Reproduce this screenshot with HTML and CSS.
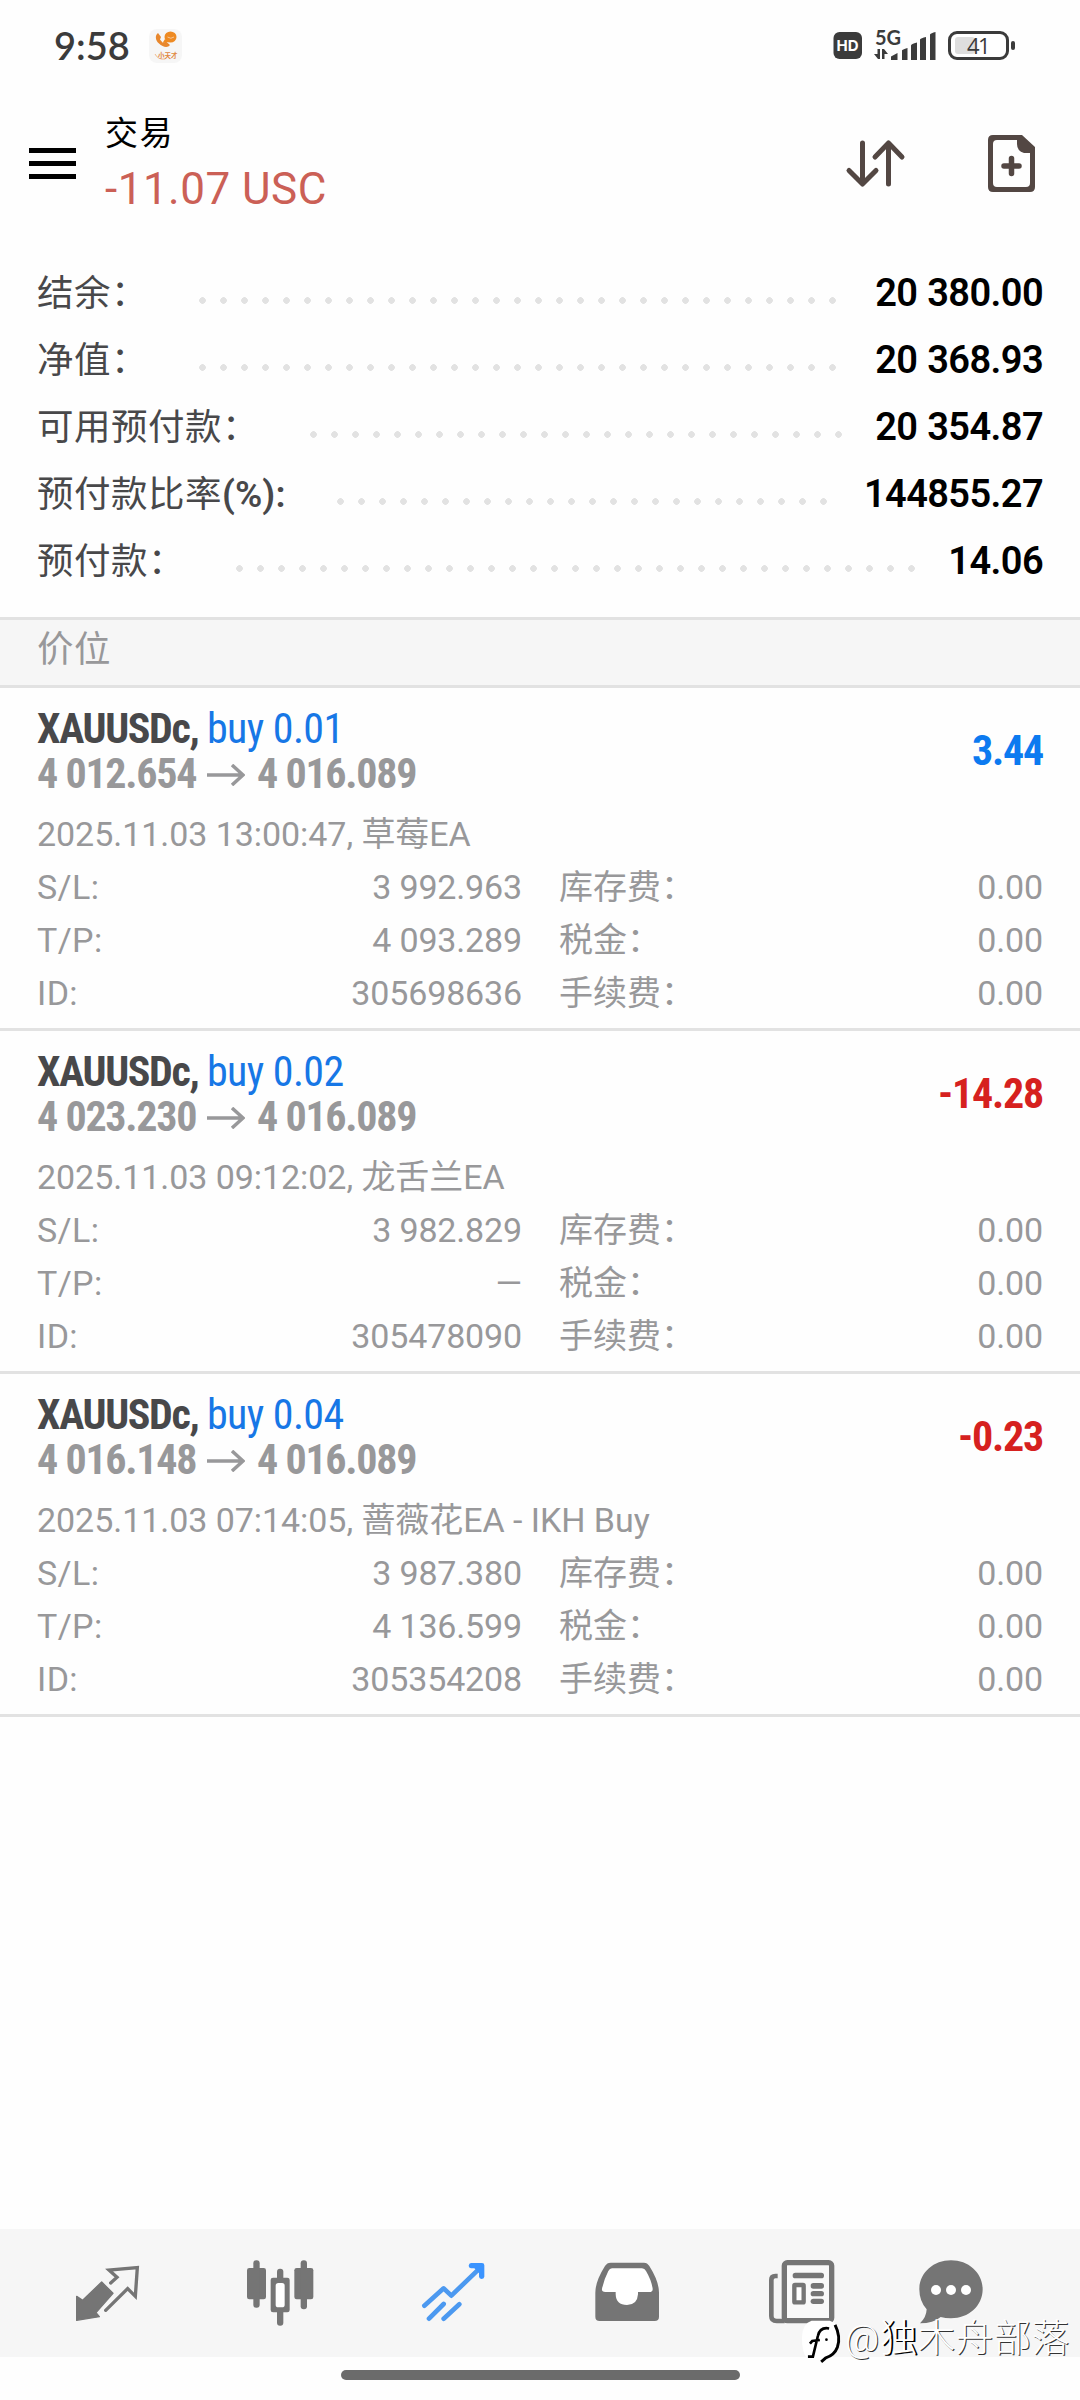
FILE: index.html
```html
<!DOCTYPE html>
<html lang="zh-CN">
<head>
<meta charset="utf-8">
<title>交易</title>
<link rel="stylesheet" href="styles.css">
</head>
<body>
<header class="status">
  <span class="clock">9:58</span>
  <svg class="app-badge" viewBox="0 0 33 34"><rect width="33" height="34" rx="8" fill="#f6f6f6"/><path d="M9 4C6 6 6 11 10 14.500C14 18.500 19 19 21 16L17 12.500L14 14L11 10.500L12 8Z" fill="#e8872d"/><ellipse cx="21.500" cy="8" rx="6" ry="5.500" fill="#ee8a22"/><path d="M16 10L13.500 14L20 13Z" fill="#ee8a22"/><path d="M18.500 8Q22 10.500 25 8" fill="none" stroke="#f6c79a"/><text class="badge-text" x="9" y="28.500">小天才</text><path d="M6 25Q9 31 16 30" fill="none" stroke="#eb9f60" stroke-width=".7"/></svg>
  <svg class="signals" viewBox="0 0 190 40">
    <rect x="3.500" y="7" width="28.500" height="27" rx="6" fill="#3b3b3b"/><text class="hd" x="6.500" y="26">HD</text>
    <text class="fiveg" x="45" y="20">5G</text>
    <g fill="#3b3b3b"><path d="M44 29L48 34H50V24H47.500V29ZM52 24V34H54.500V29H58L54 24Z"/>
    <path d="M61 35V31.500L67.500 28V35ZM72 35V25.500Q72 24.500 77.500 23V35ZM81 35V20.500Q81 19 87 17.500V35ZM90 35V14.500Q91 13 96 12V35ZM100 35V9.500Q101 8 105.500 7V35Z"/></g>
    <rect x="119.500" y="7.500" width="58" height="26" rx="7.500" fill="#fff" stroke="#3b3b3b" stroke-width="3"/><rect x="125" y="12" width="20" height="17" rx="3" fill="#dedede"/><rect x="181" y="16" width="4" height="9" rx="2" fill="#3b3b3b"/><text class="batt" x="137" y="29">41</text>
  </svg>
</header>
<section class="appbar">
  <div class="menu"><i></i><i></i><i></i></div>
  <div class="heading"><h1>交易</h1><p>-11.07 USC</p></div>
  <svg class="actions" viewBox="0 0 200 70">
    <g fill="none" stroke="#534743" stroke-width="5" stroke-linecap="round" stroke-linejoin="round"><path d="M22.500 13V53.500M9 40.500L22.500 54L36 40.500M48.500 54V13.500M35 27L48.500 13L62 27"/><path stroke-width="5.500" d="M164 36H179M171.500 28.500V43.500"/></g>
    <path fill="#534743" fill-rule="evenodd" d="M153 5H182L195 17V57Q195 62 190 62H153Q148 62 148 57V10Q148 5 153 5ZM157 10Q153 10 153 14V53Q153 57 157 57H186Q190 57 190 53V23H184Q177 21 177 14V10Z"/>
  </svg>
</section>
<section class="account">
  <div class="line l1"><span>结余：</span><i></i><b>20 380.00</b></div>
  <div class="line l2"><span>净值：</span><i></i><b>20 368.93</b></div>
  <div class="line l3"><span>可用预付款：</span><i></i><b>20 354.87</b></div>
  <div class="line l4"><span>预付款比率<em>(%):</em></span><i></i><b>144855.27</b></div>
  <div class="line l5"><span>预付款：</span><i></i><b>14.06</b></div>
</section>
<h2 class="group">价位</h2>
<main>
  <article class="pos">
    <div class="top"><div><p class="sym"><b>XAUUSDc,</b> <span>buy 0.01</span></p>
    <p class="price"><span>4 012.654</span><svg class="arrow" viewBox="0 0 38 22"><path d="M0 11H36M25 1L36 11L25 21"/></svg><span>4 016.089</span></p></div><strong class="up">3.44</strong></div>
    <p class="date">2025.11.03 13:00:47, 草莓EA</p>
    <dl><dt>S/L:</dt><dd>3 992.963</dd><dt>库存费：</dt><dd>0.00</dd><dt>T/P:</dt><dd>4 093.289</dd><dt>税金：</dt><dd>0.00</dd><dt>ID:</dt><dd>305698636</dd><dt>手续费：</dt><dd>0.00</dd></dl>
  </article>
  <article class="pos">
    <div class="top"><div><p class="sym"><b>XAUUSDc,</b> <span>buy 0.02</span></p>
    <p class="price"><span>4 023.230</span><svg class="arrow" viewBox="0 0 38 22"><path d="M0 11H36M25 1L36 11L25 21"/></svg><span>4 016.089</span></p></div><strong class="down">-14.28</strong></div>
    <p class="date">2025.11.03 09:12:02, 龙舌兰EA</p>
    <dl><dt>S/L:</dt><dd>3 982.829</dd><dt>库存费：</dt><dd>0.00</dd><dt>T/P:</dt><dd class="none">—</dd><dt>税金：</dt><dd>0.00</dd><dt>ID:</dt><dd>305478090</dd><dt>手续费：</dt><dd>0.00</dd></dl>
  </article>
  <article class="pos">
    <div class="top"><div><p class="sym"><b>XAUUSDc,</b> <span>buy 0.04</span></p>
    <p class="price"><span>4 016.148</span><svg class="arrow" viewBox="0 0 38 22"><path d="M0 11H36M25 1L36 11L25 21"/></svg><span>4 016.089</span></p></div><strong class="down">-0.23</strong></div>
    <p class="date">2025.11.03 07:14:05, 蔷薇花EA - IKH Buy</p>
    <dl><dt>S/L:</dt><dd>3 987.380</dd><dt>库存费：</dt><dd>0.00</dd><dt>T/P:</dt><dd>4 136.599</dd><dt>税金：</dt><dd>0.00</dd><dt>ID:</dt><dd>305354208</dd><dt>手续费：</dt><dd>0.00</dd></dl>
  </article>
</main>
<nav class="tabs">
  <svg class="tab" viewBox="60 87 522 384"><path fill="#757575" stroke="#757575" stroke-width="4" stroke-linejoin="round" d="M305 246L339 280L288 338L298 350L230 361V289L248 301Z"/><path fill="none" stroke="#757575" stroke-width="10" d="M332 249L351 232L327 210L412 203L406 289L383 266L317 331" stroke-linecap="round"/></svg>
  <svg class="tab" viewBox="582 87 522 384"><g fill="#757575"><rect x="741" y="204" width="57" height="94" rx="7"/><rect x="883" y="204" width="57" height="94" rx="7"/><rect x="760" y="181" width="19" height="142" rx="9"/><rect x="902" y="181" width="19" height="147" rx="9"/><rect x="831" y="206" width="19" height="171" rx="9"/><rect x="812" y="233" width="57" height="104" rx="7"/></g><rect x="827" y="249" width="27" height="73" rx="8" fill="#fff"/></svg>
  <svg class="tab" viewBox="24 87 522 384"><path fill="none" stroke="#4c99f0" stroke-width="14" stroke-linecap="round" stroke-linejoin="round" d="M193 317L251 265L274 287L362 202M207 356L251 312M251 356L298 313"/><path fill="#3b94ff" d="M333 189H366Q373 189 373 196V230Q372 237 364 237Q358 236 357 230V219L343 205H333Q326 204 326 197Q327 189 333 189Z"/></svg>
  <svg class="tab" viewBox="546 87 522 384"><path fill="#757575" d="M752 188H852Q862 188 868 198Q897 244 897 278V350Q897 363 884 363H719Q706 363 706 350V278Q706 244 735 198Q741 188 752 188Z"/><path fill="#fff" d="M756 205H846Q854 205 858 213Q874 240 878 266Q879 276 868 276H834V283Q832 315 801 315Q768 315 767 283V276H736Q724 276 726 266Q732 238 745 213Q749 205 756 205Z"/></svg>
  <svg class="tab" viewBox="-12 87 522 384"><rect x="193" y="188" width="142" height="174" rx="9" fill="#f9f9f9" stroke="#757575" stroke-width="16"/><path fill="none" stroke="#757575" stroke-width="14" d="M173 228H166Q154 228 154 240V348Q154 363 170 363H194"/><g fill="#757575"><rect x="218" y="218" width="94" height="17" rx="8"/><rect x="272" y="249" width="40" height="17" rx="8"/><rect x="272" y="273" width="40" height="16" rx="8"/><rect x="272" y="296" width="40" height="16" rx="8"/></g><rect x="223" y="255" width="28" height="52" rx="2" fill="#fff" stroke="#757575" stroke-width="13"/></svg>
  <svg class="tab last" viewBox="510 87 372 384"><path fill="#757575" d="M693 181C746 181 788 219 788 268C788 318 746 355 693 355Q676 355 662 351Q640 370 600 370Q619 352 620 328Q598 304 598 268C598 219 640 181 693 181Z"/><g fill="#fff"><circle cx="648" cy="270" r="15"/><circle cx="693" cy="270" r="15"/><circle cx="738" cy="270" r="15"/></g></svg>
</nav>
<footer class="gesture"><i></i></footer>
<div class="mark"><svg viewBox="240 360 130 135"><path d="M275 362H330Q360 370 361 410Q361 460 325 470L300 488V475H262Q245 460 246 410Q248 370 275 362Z" fill="#fff"/><path d="M346 374Q364 410 353 442Q344 466 318 474L304 486" fill="none" stroke="#000" stroke-width="9"/><path d="M328 385Q300 380 294 408L279 470L264 470M270 431L277 423L300 420" fill="none" stroke="#000" stroke-width="8"/><circle cx="320" cy="419" r="4"/></svg><span>@<b>独</b>木舟部落</span></div>
</body>
</html>
```
FILE: styles.css
```css
*{box-sizing:border-box}
body{margin:0;width:1080px;height:2400px;background:#fefefe;font-family:Roboto,"Noto Sans CJK SC",sans-serif;display:flex;flex-direction:column;position:relative;overflow:hidden}
h1,h2,p,dl,dt,dd{margin:0;font-weight:400}
svg{display:block;flex:none}
.status{height:92px;display:flex;padding-top:24px;align-items:flex-start}
.clock{margin-left:54px;width:95px;font:600 38px/42px Lato,sans-serif;color:#3b3b3b}
.app-badge{width:33px;height:34px;margin-top:5px}
.badge-text{font:700 6.500px "Noto Sans CJK SC",sans-serif;fill:#e0873c}
.signals{width:190px;height:40px;margin:1px 0 0 648px}
.hd{font:700 15px Inter,sans-serif;fill:#fff}
.fiveg{font:700 20px Lato,sans-serif;fill:#3b3b3b}
.batt{font:500 22px "Open Sans",sans-serif;fill:#3b3b3b;letter-spacing:-1.5px}
.appbar{height:167px;display:flex}
.menu{margin:56px 28px 0 29px;width:47px;display:flex;flex-direction:column;gap:8px}
.menu i{height:5px;background:#000}
.heading{flex:1;padding-top:17px}
.heading h1{font-size:33px;line-height:50px;letter-spacing:1.500px;margin-left:1px;color:#000}
.heading p{font-size:44px;line-height:52px;margin-top:4px;margin-left:1px;color:#cb6056;white-space:nowrap;letter-spacing:.5px}
.actions{width:200px;height:70px;margin:38px 40px 0 0}
.account{height:358px;padding-top:1px}
.line{height:67px;display:flex;padding:0 38px 0 37px;color:#48484a;font-size:36.500px;line-height:67px;letter-spacing:.5px}
.line i{height:7px;margin-top:37px;margin-left:1px;background:radial-gradient(circle at 3.500px 3.500px,#e2e2e2 3px,transparent 3.600px) 0 0/21px 7px repeat-x}
.line span{white-space:nowrap}
.line em{font-style:normal;font-weight:600;font-size:37px;letter-spacing:.1px}
.line b{margin-left:auto;margin-right:-1px;font-size:38px;font-weight:600;color:#000;letter-spacing:-.6px;word-spacing:1px;white-space:nowrap}
.l1 span,.l2 span{width:161px}.l1 i,.l2 i{width:637px}
.l3 span{width:272px}.l3 i{width:532px}
.l4 span{width:299px}.l4 i{width:490px}
.l5 span{width:198px}.l5 i{width:679px}
.group{height:71px;border-top:3px solid #e2e2e2;border-bottom:3px solid #e2e2e2;background:#f6f6f6;padding-left:37px;font-size:36.500px;line-height:59px;letter-spacing:.5px;color:#98989a}
.pos{height:343px;border-bottom:3px solid #e2e2e2;padding:18px 37px 0;color:#98989a}
.top{display:flex;justify-content:space-between;height:102px}
.sym,.price{font-family:"Roboto Condensed",Roboto,sans-serif;font-size:42px;line-height:45px;white-space:nowrap;display:flex}
.sym b{color:#48484a;width:170px;letter-spacing:-1.350px}
.sym span{color:#1777e6;letter-spacing:-.6px}
.price{font-weight:700;letter-spacing:-1.250px}
.price span{width:170px}
.arrow{width:38px;height:22px;margin:13px 12px 0 0;fill:none;stroke:#98989a;stroke-width:3.500}
.top strong{font:700 42px/46px "Roboto Condensed",Roboto,sans-serif;margin-top:22px;letter-spacing:-1.200px;margin-right:0}
.up{color:#0c7af0}.down{color:#d6211f}
.date{font-size:34px;line-height:53px;white-space:nowrap;letter-spacing:-.05px}
dl{display:grid;grid-template-columns:100px 385px 200px 1fr;grid-auto-rows:53px;font-size:34px;line-height:53px}
dt:nth-of-type(odd){letter-spacing:.4px}
dt:nth-of-type(even){padding-left:37px}
dd{text-align:right;letter-spacing:-.15px}
main{flex:1}
.tabs{height:128px;background:#f6f6f6;padding-left:20px;display:flex}
.tab{width:174px;height:128px}.last{width:124px}
.gesture{height:43px;display:flex;justify-content:center;padding-top:13px}
.gesture i{width:399px;height:10px;border-radius:5px;background:#6b6b6b}
.mark{position:absolute;left:800px;top:2315px;display:flex;font-size:37.500px;line-height:46px;color:#fff;font-weight:300;white-space:nowrap;letter-spacing:.5px}
.mark svg{width:43px;height:45px;margin:5px 2px 0 0}
.mark span{text-shadow:1px 1px 0 #333}
.mark b{font-weight:300;text-shadow:2px 1px 0 #000}
```
